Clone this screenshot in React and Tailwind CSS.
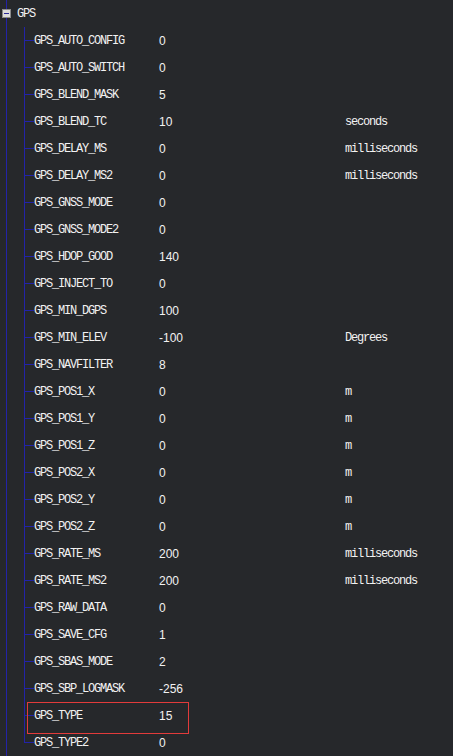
const params = [
    ["GPS_AUTO_CONFIG", "0", ""],
    ["GPS_AUTO_SWITCH", "0", ""],
    ["GPS_BLEND_MASK", "5", ""],
    ["GPS_BLEND_TC", "10", "seconds"],
    ["GPS_DELAY_MS", "0", "milliseconds"],
    ["GPS_DELAY_MS2", "0", "milliseconds"],
    ["GPS_GNSS_MODE", "0", ""],
    ["GPS_GNSS_MODE2", "0", ""],
    ["GPS_HDOP_GOOD", "140", ""],
    ["GPS_INJECT_TO", "0", ""],
    ["GPS_MIN_DGPS", "100", ""],
    ["GPS_MIN_ELEV", "-100", "Degrees"],
    ["GPS_NAVFILTER", "8", ""],
    ["GPS_POS1_X", "0", "m"],
    ["GPS_POS1_Y", "0", "m"],
    ["GPS_POS1_Z", "0", "m"],
    ["GPS_POS2_X", "0", "m"],
    ["GPS_POS2_Y", "0", "m"],
    ["GPS_POS2_Z", "0", "m"],
    ["GPS_RATE_MS", "200", "milliseconds"],
    ["GPS_RATE_MS2", "200", "milliseconds"],
    ["GPS_RAW_DATA", "0", ""],
    ["GPS_SAVE_CFG", "1", ""],
    ["GPS_SBAS_MODE", "2", ""],
    ["GPS_SBP_LOGMASK", "-256", ""],
    ["GPS_TYPE", "15", ""],
    ["GPS_TYPE2", "0", ""],
];

const mono = "[font-family:'Liberation_Mono',monospace] text-[12px] tracking-[-1.2px]";

function Row({ name, value, unit, last, marked }) {
    return (
        <div className="relative flex h-[27px] text-[#f2f2f2]">
            <div className="flex w-[10px] shrink-0 flex-col">
                <div className="h-[13px] border-l border-[#2323a8]" />
                <div className="h-px bg-[#2323a8]" />
                {!last && <div className="flex-1 border-l border-[#2323a8]" />}
            </div>
            <div className={`flex w-[125px] shrink-0 items-center ${mono}`}>{name}</div>
            <div className="flex w-[186px] shrink-0 items-center [font-family:'Liberation_Sans',sans-serif] text-[12px]">
                {value}
            </div>
            <div className={`flex items-center ${mono}`}>{unit}</div>
            {marked && (
                <div className="absolute left-[3px] top-0 h-[32px] w-[162px] border border-[#e23b3b]" />
            )}
        </div>
    );
}

export default function App() {
    return (
        <div className="h-[756px] w-[453px] overflow-hidden bg-[#26282b]">
            <div className="ml-[6px] h-full border-l border-[#2323a8]">
                <div className="flex h-[27px] items-center text-[#f2f2f2]">
                    <div className="-ml-[5px] flex h-[9px] w-[9px] items-center justify-center border border-[#8a8a8a] bg-[#dcdcdc]">
                        <div className="h-px w-[5px] bg-[#2a2a9a]" />
                    </div>
                    <span className={`ml-[6px] ${mono}`}>GPS</span>
                </div>
                <div className="ml-[17px]">
                    {params.map(([name, value, unit], i) => (
                        <Row
                            key={name}
                            name={name}
                            value={value}
                            unit={unit}
                            last={i === params.length - 1}
                            marked={name === "GPS_TYPE"}
                        />
                    ))}
                </div>
            </div>
        </div>
    );
}
